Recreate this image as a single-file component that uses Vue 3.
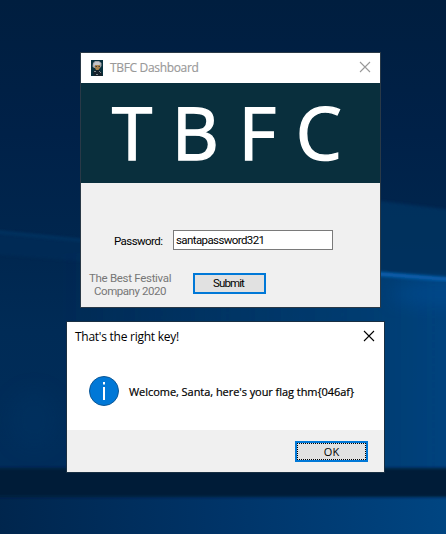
<script setup>
import { ref } from 'vue'

const password = ref('santapassword321')
</script>

<template>
  <main class="desktop">
    <svg class="wallpaper" viewBox="0 0 446 534" preserveAspectRatio="none" aria-hidden="true">
      <defs>
        <linearGradient id="base" x1="0" y1="0" x2="0" y2="1">
          <stop offset="0" stop-color="#001e3f" />
          <stop offset="0.25" stop-color="#002148" />
          <stop offset="0.45" stop-color="#00264e" />
          <stop offset="0.62" stop-color="#002b56" />
          <stop offset="0.85" stop-color="#002d5a" />
          <stop offset="1" stop-color="#002d5d" />
        </linearGradient>
        <linearGradient id="glow" x1="0" y1="0" x2="1" y2="0">
          <stop offset="0" stop-color="#00457f" stop-opacity="0" />
          <stop offset="0.8" stop-color="#00457f" stop-opacity="0.7" />
          <stop offset="1" stop-color="#004787" stop-opacity="0.85" />
        </linearGradient>
        <linearGradient id="floor" x1="0" y1="0" x2="1" y2="0">
          <stop offset="0" stop-color="#00254c" />
          <stop offset="0.5" stop-color="#003468" />
          <stop offset="1" stop-color="#004683" />
        </linearGradient>
        <filter id="soft" x="-20%" y="-20%" width="140%" height="140%"><feGaussianBlur stdDeviation="1.8" /></filter>
        <filter id="wide" x="-50%" y="-50%" width="200%" height="200%"><feGaussianBlur stdDeviation="9" /></filter>
      </defs>
      <rect width="446" height="534" fill="url(#base)" />
      <path d="M340 196 L460 211 V285 L340 272Z" fill="#003464" opacity="0.75" filter="url(#soft)" />
      <path d="M-10 230 L90 241 V262 L-10 254Z" fill="#002f5c" opacity="0.5" filter="url(#soft)" />
      <path d="M-10 231 L90 241" stroke="#063b6c" stroke-width="3" opacity="0.6" filter="url(#soft)" />
      <path d="M60 252 L360 270 L460 281 V480 H60Z" fill="url(#glow)" filter="url(#soft)" />
      <ellipse cx="438" cy="294" rx="48" ry="12" fill="#004f98" opacity="0.5" filter="url(#wide)" />
      <path d="M340 271 L460 280" stroke="#0760b0" stroke-width="4" filter="url(#soft)" />
      <ellipse cx="34" cy="420" rx="26" ry="30" fill="#003565" opacity="0.35" filter="url(#wide)" />
      <rect x="-10" y="496" width="466" height="50" fill="url(#floor)" />
      <rect x="-10" y="468" width="466" height="29" fill="#001b38" filter="url(#soft)" />
    </svg>

    <section class="window dashboard">
      <header class="titlebar">
        <svg class="avatar" width="12" height="16" viewBox="0 0 12 16" aria-hidden="true">
          <rect width="12" height="16" fill="#07303d" />
          <path d="M1.5 6.5 L2 3 L4 1 H8 L10.5 3 V6 L9 8 H3Z" fill="#9b9da2" />
          <path d="M4 5 H9 V8 L7.5 10 H5L4 8Z" fill="#a8824b" />
          <path d="M2.5 4 L4.5 2 H8 L10 4 L8 5 H4 L2.5 7Z" fill="#c2c5ca" />
          <path d="M4.5 6.5h1.5M7.5 6.5h1.5" stroke="#493c31" />
          <path d="M2 12 L4 10 H8 L11 13 V16 H3Z" fill="#17222b" />
          <path d="M3 11.5h2M8 11l2 2M5 14.5h2" stroke="#7f878c" />
        </svg>
        <h1>TBFC Dashboard</h1>
        <svg class="close" width="12" height="12" viewBox="0 0 12 12"><path d="M1 1L11 11M11 1L1 11" /></svg>
      </header>
      <div class="banner">T B F C</div>
      <form class="login" @submit.prevent>
        <div class="field">
          <label for="password">Password:</label>
          <input id="password" v-model="password" type="text" spellcheck="false" />
        </div>
        <div class="actions">
          <p><span class="company-a">The Best Festival</span><br /><span class="company-b">Company 2020</span></p>
          <button class="button" type="submit"><span class="submit-label">Submit</span></button>
        </div>
      </form>
    </section>

    <section class="window dialog">
      <header class="dialog-title">
        <h2>That's the right key!</h2>
        <svg class="close" width="12" height="12" viewBox="0 0 12 12"><path d="M1 1L11 11M11 1L1 11" /></svg>
      </header>
      <div class="message">
        <svg width="30" height="30" viewBox="0 0 30 30" aria-hidden="true">
          <circle cx="15" cy="15" r="14.5" fill="#0078d7" stroke="#0c5796" />
          <path d="M14 6h2v2.5h-2zM14 11h2v13h-2z" fill="#fff" />
        </svg>
        <p>Welcome, Santa, here's your flag thm{046af}</p>
      </div>
      <footer>
        <button class="button focused" type="button"><span>OK</span></button>
      </footer>
    </section>
  </main>
</template>

<style>
body {
  margin: 0;
  overflow: hidden;
}
</style>

<style scoped>
* {
  box-sizing: border-box;
}

.desktop {
  position: relative;
  isolation: isolate;
  display: flex;
  flex-direction: column;
  gap: 13px;
  width: 446px;
  height: 534px;
  padding: 52px 61px 0 66px;
  overflow: hidden;
  color: #000;
  font-family: "Open Sans", sans-serif;
  font-size: 12px;
}

.wallpaper {
  position: absolute;
  inset: 0;
  z-index: -1;
  width: 446px;
  height: 534px;
}

.window {
  flex: none;
  border: 1px solid #293947;
  background: #fff;
}

.dashboard {
  width: 301px;
  height: 256px;
  margin-left: 14px;
  background: #f0f0f0;
}

.titlebar {
  display: flex;
  align-items: center;
  height: 30px;
  padding: 0 9px 0 10px;
  background: #fff;
  color: #999;
}

.avatar {
  margin-top: -1px;
}

h1,
h2,
p {
  margin: 0;
  font-size: 12px;
  font-weight: 400;
  line-height: 16px;
  white-space: nowrap;
}

h1 {
  margin-left: 7px;
  letter-spacing: -0.33px;
  -webkit-text-stroke: 0.15px currentColor;
}

h2 {
  letter-spacing: -0.26px;
}

.close {
  margin: 0 0 2px auto;
  fill: none;
  stroke: currentColor;
  stroke-width: 1.1;
}

.banner {
  height: 100px;
  padding-left: 31px;
  background: #092f3d;
  color: #fff;
  font-size: 73px;
  letter-spacing: 0.3px;
  line-height: 98px;
  white-space: pre;
  -webkit-text-stroke: 1.4px #fff;
}

.login {
  padding-top: 47px;
  font-family: Roboto, sans-serif;
}

.field {
  display: flex;
  align-items: center;
  height: 20px;
  padding-left: 33px;
}

label {
  width: 59px;
  padding-top: 2px;
  font-size: 11.5px;
  letter-spacing: -0.58px;
}

input {
  width: 160px;
  height: 20px;
  padding: 0 2px 1px;
  border: 1px solid #7a7a7a;
  border-radius: 0;
  outline: 0;
  background: #fff;
  color: #000;
  font: 11.5px Roboto, sans-serif;
  letter-spacing: -0.6px;
}

.actions {
  display: flex;
  align-items: flex-start;
  padding: 22px 0 0 8px;
}

.actions p {
  width: 82px;
  margin-right: 22px;
  color: #777;
  font-size: 11.5px;
  line-height: 13px;
  text-align: center;
}

.company-a {
  letter-spacing: -0.3px;
}

.company-b {
  letter-spacing: -0.45px;
}

.button {
  display: flex;
  align-items: center;
  justify-content: center;
  width: 73px;
  height: 21px;
  margin-top: 1px;
  padding: 0;
  border: 2px solid #0078d7;
  border-radius: 0;
  background: #e1e1e1;
  color: #000;
  font: 11.5px Roboto, sans-serif;
}

.submit-label {
  margin: -1px 0 0 -2px;
  letter-spacing: -0.9px;
}

.dialog {
  width: 319px;
  height: 152px;
  border-color: #182f43;
}

.dialog-title {
  display: flex;
  align-items: center;
  height: 30px;
  padding: 0 9px 0 8px;
}

.message {
  display: flex;
  align-items: center;
  height: 78px;
  padding: 0 0 0 22px;
}

.message p {
  margin: 2px 0 0 10px;
  font-size: 11px;
  letter-spacing: -0.05px;
  -webkit-text-stroke: 0.2px currentColor;
}

footer {
  display: flex;
  justify-content: flex-end;
  height: 42px;
  padding: 10px 16px 0 0;
  background: #f0f0f0;
}

.focused {
  font-family: "Open Sans", sans-serif;
  font-size: 11px;
}

.focused span {
  display: flex;
  align-items: center;
  justify-content: center;
  width: 69px;
  height: 17px;
  border: 1px dotted #000;
}
</style>
